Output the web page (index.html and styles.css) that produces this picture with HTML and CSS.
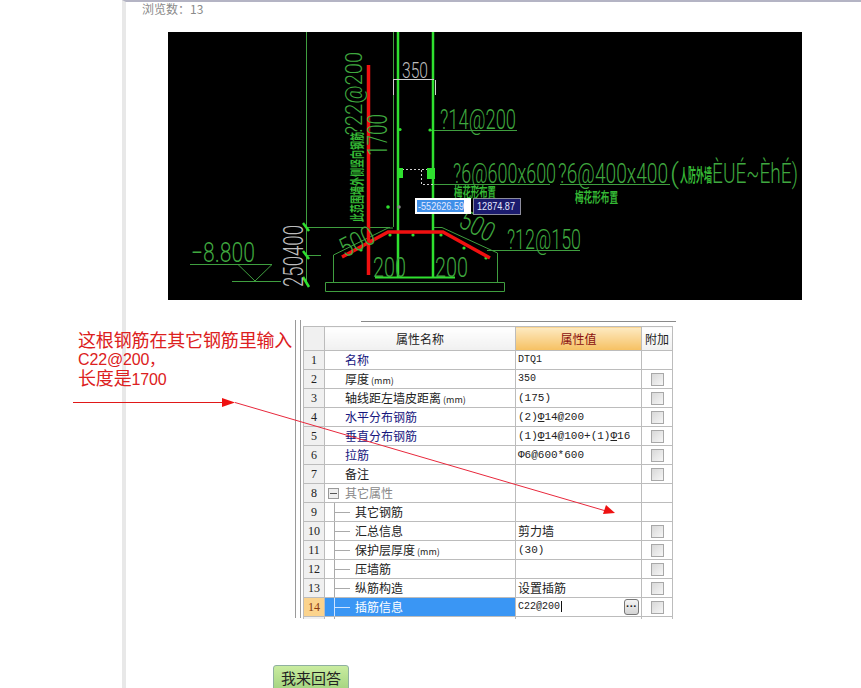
FILE: index.html
```html
<!DOCTYPE html>
<html lang="zh-CN">
<head>
<meta charset="utf-8">
<title>浏览数</title>
<link rel="stylesheet" href="styles.css">
</head>
<body>
<main class="sheet">
  <div class="views">浏览数：13</div>
  <figure class="cad">
    <svg class="cad-svg" viewBox="168 32 634 268" width="634" height="268" xmlns="http://www.w3.org/2000/svg">
      <rect x="168" y="32" width="634" height="268" fill="#000"/>
      <g fill="none" stroke="#3f9e3f" stroke-width="1">
        <path d="M306.5 32V285M306 227.5H390M305 255.5H321M232 281.5H281M190 264.5H271M238 264.5H272L255 281L238 264.5"/>
        <path d="M333.5 282V255L388 228H393M433 227.5H442L497.5 253V282M325.5 282.5H504.5V291.5H325.5Z"/>
        <path d="M430 130.5H517M433 184.5H550M560 184.5H670M487 250.5H580"/>
        <path d="M393.5 32V227"/>
      </g>
      <g fill="none" stroke="#2fe02f">
        <path d="M398 32V277M433 32V277" stroke-width="2.5"/>
        <path d="M375 277.5H455" stroke-width="2"/>
        <path d="M303 223L309 231M303 251L309 259M303 277L309 287" stroke-width="2.5"/>
      </g>
      <g fill="none" stroke="#d0d0d0" stroke-width="1">
        <path d="M393 79.5H434M393.5 80V95M435.5 80V95"/>
        <path d="M398 169.5H432M421.5 170V184.5H433" stroke-dasharray="2 2"/>
      </g>
      <path d="M397 168h6v10h-6zM427 168h8v11h-8z" fill="#2fe02f"/>
      <g fill="#2fe02f">
        <circle cx="388" cy="207" r="1.8"/><circle cx="390" cy="235" r="1.6"/><circle cx="413" cy="235" r="1.6"/>
        <circle cx="441" cy="235" r="1.6"/><circle cx="361" cy="250" r="1.6"/><circle cx="464" cy="248" r="1.6"/>
        <circle cx="486" cy="258" r="1.6"/><circle cx="400" cy="129.5" r="1.6"/><circle cx="430" cy="130" r="1.6"/>
      </g>
      <circle cx="399" cy="207" r="1.8" fill="#888"/>
      <g fill="none" stroke="#f01010" stroke-width="3.5">
        <path d="M368.5 65V275"/>
        <path d="M342 257L388 232H443L490 258"/>
      </g>
      <g class="cad-text">
        <text transform="translate(440 129) scale(.7 1)" textLength="108.600" lengthAdjust="spacingAndGlyphs">?14@200</text>
        <text transform="translate(453 183) scale(.665 1)" textLength="155" lengthAdjust="spacingAndGlyphs">?6@600x600</text>
        <text transform="translate(558 183) scale(.71 1)" textLength="155" lengthAdjust="spacingAndGlyphs">?6@400x400</text>
        <text x="670" y="183" textLength="9" lengthAdjust="spacingAndGlyphs">(</text>
        <text transform="translate(712 183) scale(.623 1)" textLength="138" lengthAdjust="spacingAndGlyphs">ÈUÉ~ÈhÉ)</text>
        <text transform="translate(507 249) scale(.7 1)" textLength="105.700" lengthAdjust="spacingAndGlyphs">?12@150</text>
        <text x="191" y="262" textLength="64" lengthAdjust="spacingAndGlyphs">−8.800</text>
        <text x="373" y="277" textLength="33" lengthAdjust="spacingAndGlyphs">200</text>
        <text x="435" y="277" textLength="33" lengthAdjust="spacingAndGlyphs">200</text>
        <text transform="translate(345 258) rotate(-27)" textLength="36" lengthAdjust="spacingAndGlyphs">500</text>
        <text transform="translate(457 226) rotate(27)" textLength="36" lengthAdjust="spacingAndGlyphs">500</text>
        <text class="cad-small" transform="translate(362 135) rotate(-90) scale(.83 1)" textLength="100" lengthAdjust="spacingAndGlyphs">?22@200</text>
        <text transform="translate(387 156) rotate(-90) scale(.7 1)" textLength="60" lengthAdjust="spacingAndGlyphs">1700</text>
      </g>
      <g class="cad-white">
        <text class="cad-dim" x="402" y="78" textLength="26" lengthAdjust="spacingAndGlyphs">350</text>
        <text transform="translate(303 287) rotate(-90)" textLength="62" lengthAdjust="spacingAndGlyphs">250400</text>
      </g>
      <g class="cad-cjk">
        <text transform="translate(362 222) rotate(-90) scale(.643 1)" textLength="140" lengthAdjust="spacingAndGlyphs">此范围墙外侧竖向钢筋</text>
        <text class="cad-tall" transform="translate(680 182) scale(.444 1)" textLength="72" lengthAdjust="spacingAndGlyphs">人防外墙</text>
        <text transform="translate(454 197) scale(.6 1)" textLength="70" lengthAdjust="spacingAndGlyphs">梅花形布置</text>
        <text transform="translate(575 202) scale(.614 1)" textLength="70" lengthAdjust="spacingAndGlyphs">梅花形布置</text>
      </g>
      <rect x="415" y="198" width="56" height="16" fill="#fff"/>
      <rect x="417" y="200" width="47" height="12" fill="#3f8fe8"/>
      <text class="cad-input" x="418" y="210" textLength="46" lengthAdjust="spacingAndGlyphs">-552626.59</text>
      <rect x="473.500" y="198.500" width="47" height="16" fill="#1b1b6e" stroke="#8d8d9e"/>
      <text class="cad-input" x="477" y="210" textLength="38" lengthAdjust="spacingAndGlyphs">12874.87</text>
    </svg>
  </figure>

  <section class="answer-row">
    <p class="note">这根钢筋在其它钢筋里输入<br><span class="note-latin">C22@200，</span><br>长度是<span class="note-num">1700</span></p>
    <div class="panel">
      <div class="panel-rule"></div>
      <table class="props">
        <colgroup><col class="c-num"><col class="c-name"><col class="c-val"><col class="c-add"></colgroup>
        <thead>
          <tr><th class="num"></th><th>属性名称</th><th class="val-head">属性值</th><th class="add-head">附加</th></tr>
        </thead>
        <tbody>
          <tr><td class="num">1</td><td class="name link">名称</td><td class="val">DTQ1</td><td></td></tr>
          <tr><td class="num">2</td><td class="name">厚度<small>(mm)</small></td><td class="val">350</td><td class="add"><span class="check"></span></td></tr>
          <tr><td class="num">3</td><td class="name">轴线距左墙皮距离<small>(mm)</small></td><td class="val wide">(175)</td><td class="add"><span class="check"></span></td></tr>
          <tr><td class="num">4</td><td class="name link">水平分布钢筋</td><td class="val wide">(2)<u>Φ</u>14@200</td><td class="add"><span class="check"></span></td></tr>
          <tr><td class="num">5</td><td class="name link">垂直分布钢筋</td><td class="val wide">(1)<u>Φ</u>14@100+(1)<u>Φ</u>16</td><td class="add"><span class="check"></span></td></tr>
          <tr><td class="num">6</td><td class="name link">拉筋</td><td class="val wide">Φ6@600*600</td><td class="add"><span class="check"></span></td></tr>
          <tr><td class="num">7</td><td class="name">备注</td><td class="val"></td><td class="add"><span class="check"></span></td></tr>
          <tr><td class="num">8</td><td class="group"><span class="minus"></span>其它属性</td><td class="val"></td><td></td></tr>
          <tr><td class="num">9</td><td class="child">其它钢筋</td><td class="val"></td><td></td></tr>
          <tr><td class="num">10</td><td class="child">汇总信息</td><td class="val cjk">剪力墙</td><td class="add"><span class="check"></span></td></tr>
          <tr><td class="num">11</td><td class="child">保护层厚度<small>(mm)</small></td><td class="val wide">(30)</td><td class="add"><span class="check"></span></td></tr>
          <tr><td class="num">12</td><td class="child">压墙筋</td><td class="val"></td><td class="add"><span class="check"></span></td></tr>
          <tr><td class="num">13</td><td class="child">纵筋构造</td><td class="val cjk">设置插筋</td><td class="add"><span class="check"></span></td></tr>
          <tr class="current"><td class="num">14</td><td class="child">插筋信息</td><td class="val"><span class="caret">C22@200</span><span class="more">···</span></td><td class="add"><span class="check"></span></td></tr>
          <tr class="stub"><td class="num"></td><td class="stub-name"></td><td></td><td></td></tr>
        </tbody>
      </table>
    </div>
  </section>

  <div class="actions"><button class="reply" type="button">我来回答</button></div>
</main>
<svg class="arrows" viewBox="0 0 861 688" width="861" height="688" xmlns="http://www.w3.org/2000/svg">
  <path d="M73 402.500H224" stroke="#e01818" stroke-width="1" fill="none"/>
  <path d="M222 398L235 402.500L222 407Z" fill="#ee1111"/>
  <path d="M235 402.500L606 511" stroke="#e8283c" stroke-width="1" fill="none"/>
  <path d="M615 513L603 514L606 505Z" fill="#ee1111"/>
</svg>
</body>
</html>
```

FILE: styles.css
```css
html, body {
  margin: 0;
  height: 688px;
  overflow: hidden;
  background: #fff;
}
body {
  position: relative;
  font-family: "Noto Sans CJK SC", "Liberation Sans", sans-serif;
}
.sheet {
  margin-left: 122px;
  border-left: 4px solid #e8e8e8;
  border-top: 2px solid #b4b4c4;
  height: 686px;
}
.views {
  height: 30px;
  padding-left: 16px;
  font-size: 12px;
  line-height: 13px;
  color: #8a8a8a;
}
.cad {
  margin: 0 0 0 42px;
  width: 634px;
  height: 268px;
}
.cad-svg { display: block; }
.cad-text text, .cad-white text {
  font-family: "Roboto", "Liberation Sans", sans-serif;
  font-weight: 300;
  font-size: 27px;
}
.cad-text { fill: #3fa83f; }
.cad-white { fill: #bdbdbd; }
.cad-text .cad-small { font-size: 24px; }
.cad-white .cad-dim { font-size: 22px; }
.cad-cjk text {
  font-family: "Noto Sans CJK SC", sans-serif;
  font-weight: 700;
  font-size: 14px;
  fill: #35b835;
}
.cad-cjk .cad-tall { font-size: 18px; }
.cad-input {
  font-family: "Liberation Sans", sans-serif;
  font-size: 10px;
  fill: #e4e8ff;
}
.answer-row {
  display: flex;
  margin: 20px 0 0 -48px;
}
.note {
  width: 217px;
  margin: 10px 0 0;
  font-size: 18px;
  line-height: 18px;
  letter-spacing: -0.15px;
  color: #dc2020;
}
.note-latin, .note-num {
  font-family: "Liberation Sans", sans-serif;
  font-size: 16px;
  line-height: 1;
}
.panel {
  width: 381px;
  height: 298px;
  padding-left: 7px;
  box-sizing: border-box;
  border-left: 1px solid #9a9a9a;
  background: linear-gradient(#9a9a9a, #9a9a9a) 4px 0 / 1px 100% no-repeat;
}
.panel-rule {
  height: 1px;
  margin: 1px 0 4px 58px;
  background: #8a8a8a;
}
.props {
  border-collapse: collapse;
  table-layout: fixed;
  width: 369px;
  font-size: 12px;
  color: #222;
}
.c-num { width: 21px; }
.c-name { width: 191px; }
.c-val { width: 126px; }
.c-add { width: 31px; }
.props th, .props td {
  border: 1px solid #bcbcbc;
  padding: 0;
  height: 18px;
  line-height: 14px;
  white-space: nowrap;
  overflow: hidden;
}
.props thead th {
  height: 23px;
  font-weight: 400;
  background: linear-gradient(#fff, #f0f0f0);
}
.props thead .val-head {
  background: linear-gradient(#fdeac2, #f6c061);
  color: #8a1010;
}
.props thead .add-head { color: #222; }
.props .num {
  background: #f0f0f0;
  text-align: center;
  font-family: "Liberation Serif", serif;
  font-size: 12px;
}
.name { padding-left: 20px !important; }
.link { color: #16167e; }
small {
  font-size: 9px;
  line-height: 1;
  margin-left: 2px;
}
.group {
  padding-left: 3px !important;
  color: #888;
}
.minus {
  display: inline-block;
  box-sizing: border-box;
  width: 11px;
  height: 11px;
  margin-right: 6px;
  vertical-align: -1px;
  border: 1px solid #999;
  background: linear-gradient(#555, #555) center / 7px 1px no-repeat, #eee;
}
.child {
  padding-left: 30px !important;
  background:
    linear-gradient(#aaa, #aaa) 9px 0 / 1px 100% no-repeat,
    linear-gradient(#aaa, #aaa) 9px 50% / 16px 1px no-repeat;
}
.stub-name {
  background: linear-gradient(#aaa, #aaa) 9px 0 / 1px 100% no-repeat;
}
.val {
  padding-left: 2px !important;
  font-family: "Liberation Mono", "Noto Sans CJK SC", monospace;
  font-size: 10px;
}
.val.wide { font-size: 11px; }
.val.cjk {
  font-family: "Noto Sans CJK SC", sans-serif;
  font-size: 12px;
}
.add { text-align: center; }
.check {
  display: inline-block;
  box-sizing: border-box;
  width: 13px;
  height: 13px;
  vertical-align: -2px;
  border: 1px solid #a8a8a8;
  background: linear-gradient(135deg, #d8d8d8, #f6f6f6);
}
.current .num {
  background: #fbd38c;
  color: #8a3a10;
}
.current .child {
  color: #fff;
  background:
    linear-gradient(#cfe4ff, #cfe4ff) 9px 0 / 1px 100% no-repeat,
    linear-gradient(#cfe4ff, #cfe4ff) 9px 50% / 16px 1px no-repeat,
    #3a96f4;
}
.current .val {
  position: relative;
  overflow: visible;
}
.caret {
  border-right: 1px solid #111;
  padding-right: 1px;
}
.more {
  position: absolute;
  right: 2px;
  top: 1px;
  box-sizing: border-box;
  width: 15px;
  height: 16px;
  border: 1px solid #777;
  border-radius: 3px;
  background: linear-gradient(#f4f4f4, #d4d4d4);
  font-family: "Liberation Sans", sans-serif;
  font-weight: 700;
  font-size: 11px;
  line-height: 13px;
  text-align: center;
  color: #222;
}
.stub td { height: 2px; line-height: 2px; border-bottom: 0; }
.actions {
  margin: 47px 0 0 147px;
}
.reply {
  display: block;
  width: 76px;
  height: 30px;
  padding: 0 0 5px;
  border: 1px solid #8fb0a0;
  border-radius: 3px;
  background: linear-gradient(#c9eca0, #9ed07a);
  font-family: "Noto Sans CJK SC", sans-serif;
  font-size: 15px;
  color: #222;
}
.arrows {
  position: absolute;
  left: 0;
  top: 0;
  pointer-events: none;
}
```
